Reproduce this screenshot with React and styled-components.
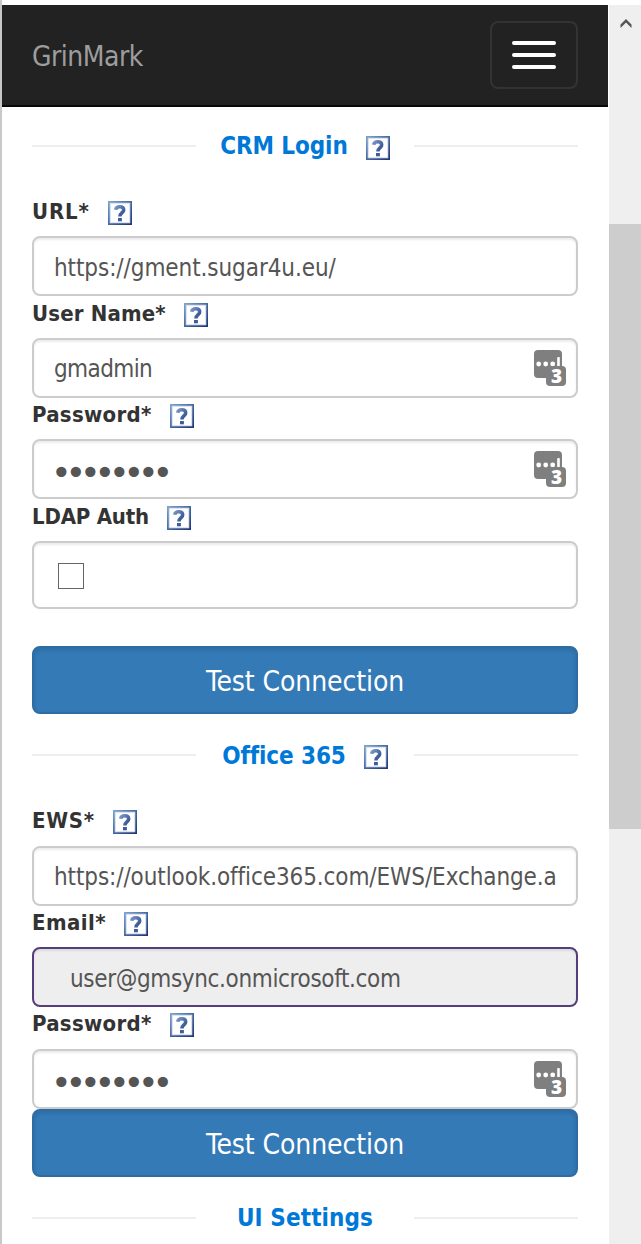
/* eslint-disable react/prop-types */
import styled, { createGlobalStyle } from "styled-components";

const crmFields = [
    {
        label: "URL*",
        tracking: 0.9,
        value: "https://gment.sugar4u.eu/",
        spacing: -0.08,
        lead: 5,
        row: 40,
        drop: 4,
    },
    {
        label: "User Name*",
        tracking: 0.15,
        value: "gmadmin",
        lead: 7,
        row: 42,
        manager: true,
    },
    {
        label: "Password*",
        tracking: 0.3,
        value: "password",
        type: "password",
        lead: 6,
        row: 41,
        manager: true,
    },
];

const officeFields = [
    {
        label: "EWS*",
        tracking: 0.75,
        value: "https://outlook.office365.com/EWS/Exchange.a",
        spacing: -0.1,
        lead: 5,
        row: 41,
        drop: 2,
    },
    {
        label: "Email*",
        tracking: 0.45,
        value: "user@gmsync.onmicrosoft.com",
        spacing: -0.36,
        lead: 6,
        row: 41,
        drop: 4,
        locked: true,
    },
    {
        label: "Password*",
        tracking: 0.3,
        value: "password",
        type: "password",
        lead: 6,
        row: 42,
        manager: true,
    },
];

const Help = () => (
    <HelpIcon viewBox="0 0 24 24" aria-hidden="true">
        <defs>
            <linearGradient id="help" x1="0" y1="0" x2="1" y2="1">
                <stop offset="0" stopColor="#7fa6d0" />
                <stop offset="0.5" stopColor="#45689f" />
                <stop offset="1" stopColor="#1d3273" />
            </linearGradient>
            <linearGradient id="mark" x1="0" y1="0" x2="1" y2="1">
                <stop offset="0" stopColor="#7593c2" />
                <stop offset="1" stopColor="#2c4a8c" />
            </linearGradient>
        </defs>
        <rect width="24" height="24" fill="url(#help)" />
        <rect x="1.700" y="1.700" width="20.600" height="20.600" fill="#cfd9e8" />
        <rect x="2.700" y="2.700" width="18.600" height="18.600" fill="#fff" />
        <path
            d="M7.700 8.800C8 6.600 9.400 5.800 11.700 5.800c2.500 0 4 1.200 4 3.100 0 2.700-3.800 2.800-3.800 6.500"
            fill="none"
            stroke="url(#mark)"
            strokeWidth="3.500"
        />
        <rect x="10" y="17" width="3.900" height="3.300" fill="#3d5c9b" />
    </HelpIcon>
);

const Manager = () => (
    <ManagerIcon viewBox="0 0 32 36" aria-hidden="true">
        <rect width="28" height="28" rx="4" fill="#7f7f7f" />
        <circle cx="4.700" cy="14" r="2.400" fill="#fff" />
        <circle cx="11.700" cy="14" r="2.400" fill="#fff" />
        <circle cx="18.700" cy="14" r="2.400" fill="#fff" />
        <rect x="23.200" y="7" width="2.600" height="10" rx="1" fill="#fff" />
        <rect x="12" y="16" width="20" height="20" rx="4" fill="#7f7f7f" />
        <Count x="22.500" y="33.200" textAnchor="middle">
            3
        </Count>
    </ManagerIcon>
);

const Heading = ({ title, help, spacing, gap, drop }) => (
    <Legend $gap={gap}>
        <Title $spacing={spacing} $drop={drop}>
            <span>{title}</span>
            {help && <Help />}
        </Title>
    </Legend>
);

const Field = ({
    label,
    tracking,
    value,
    type,
    lead,
    row,
    drop,
    manager,
    locked,
    spacing,
}) => (
    <div>
        <Label $lead={lead} $row={row} $tracking={tracking}>
            <span>{label}</span>
            <Help />
        </Label>
        <InputBox $locked={locked}>
            {type === "password" ? (
                <PasswordInput type="password" defaultValue={value} />
            ) : (
                <Input
                    type="text"
                    defaultValue={value}
                    disabled={locked}
                    $spacing={spacing}
                    $drop={drop}
                />
            )}
            {manager && <Manager />}
        </InputBox>
    </div>
);

export default function App() {
    return (
        <>
            <GlobalStyle />
            <Window>
                <Page>
                    <Navbar>
                        <Brand>GrinMark</Brand>
                        <Toggle aria-label="menu">
                            <Bar />
                            <Bar />
                            <Bar />
                        </Toggle>
                    </Navbar>
                    <Form>
                        <Heading title="CRM Login" help spacing={-0.1} />
                        {crmFields.map((field) => (
                            <Field key={field.label} {...field} />
                        ))}
                        <Label $lead={7} $row={42} $tracking={-0.2}>
                            <span>LDAP Auth</span>
                            <Help />
                        </Label>
                        <CheckBoxRow>
                            <CheckBox type="checkbox" />
                        </CheckBoxRow>
                        <Button $gap={37}>Test Connection</Button>
                        <Heading
                            title="Office 365"
                            help
                            spacing={-0.1}
                            gap={2}
                            drop={1}
                        />
                        {officeFields.map((field) => (
                            <Field key={field.label} {...field} />
                        ))}
                        <Button>Test Connection</Button>
                        <Heading title="UI Settings" spacing={0.1} gap={2} />
                    </Form>
                </Page>
                <ScrollBar>
                    <Arrow viewBox="0 0 12 10">
                        <path
                            d="M6 0 11.500 5.500V9L6 3.500.500 9V5.500z"
                            fill="#555"
                        />
                    </Arrow>
                    <Thumb />
                </ScrollBar>
            </Window>
        </>
    );
}

const GlobalStyle = createGlobalStyle`
    * {
        box-sizing: border-box;
    }

    body {
        margin: 0;
        background: #fff;
        color: #333;
        font-family: "DejaVu Sans Condensed", "DejaVu Sans", sans-serif;
        font-stretch: condensed;
    }

    input,
    button {
        font-family: inherit;
        font-stretch: inherit;
    }
`;

const Window = styled.div`
    display: flex;
    width: 641px;
    height: 1244px;
    padding-top: 5px;
    border-left: 2px solid #c8c8c8;
    overflow: hidden;
`;

const Page = styled.div`
    width: 606px;
    margin-right: 1px;
    flex-shrink: 0;
`;

const Navbar = styled.nav`
    height: 102px;
    padding: 0 30px;
    display: flex;
    align-items: center;
    justify-content: space-between;
    background: #222;
    border-bottom: 2px solid #080808;
`;

const Brand = styled.span`
    padding-top: 3px;
    color: #9d9d9d;
    font-size: 28px;
    letter-spacing: -0.5px;
`;

const Toggle = styled.button`
    width: 88px;
    height: 68px;
    padding: 0;
    display: flex;
    flex-direction: column;
    align-items: center;
    justify-content: center;
    gap: 8px;
    background: transparent;
    border: 2px solid #333;
    border-radius: 8px;
`;

const Bar = styled.span`
    width: 44px;
    height: 4px;
    border-radius: 2px;
    background: #fff;
`;

const Form = styled.main`
    padding: 0 30px;
`;

const Legend = styled.div`
    height: 89px;
    margin-top: ${(props) => props.$gap || 0}px;
    padding-top: 24px;
    display: grid;
    grid-template-columns: 164px 1fr 164px;
    align-items: start;

    &::before,
    &::after {
        content: "";
        height: 2px;
        margin-top: 14px;
        background: #eee;
    }
`;

const Title = styled.h2`
    margin: 1px 0 0;
    height: 29px;
    display: flex;
    justify-content: center;
    color: #0078d7;
    font-size: 24px;
    line-height: 29px;
    letter-spacing: ${(props) => props.$spacing}px;

    span {
        padding-top: ${(props) => props.$drop || 0}px;
    }

    svg {
        margin: 4px 0 0 18px;
    }
`;

const HelpIcon = styled.svg`
    width: 24px;
    height: 24px;
    flex-shrink: 0;
`;

const Label = styled.label`
    height: ${(props) => props.$row}px;
    padding-top: ${(props) => props.$lead}px;
    display: flex;
    font-size: 22px;
    font-weight: bold;
    line-height: 22px;
    letter-spacing: ${(props) => props.$tracking}px;

    svg {
        margin-left: 18px;
    }
`;

const InputBox = styled.div`
    height: 60px;
    padding: 0 ${(props) => (props.$locked ? "36px" : "20px")};
    display: flex;
    align-items: center;
    position: relative;
    background: ${(props) => (props.$locked ? "#eee" : "#fff")};
    border: 2px solid ${(props) => (props.$locked ? "#563d7c" : "#ccc")};
    border-radius: 8px;
    box-shadow: inset 0 2px 2px rgba(0, 0, 0, 0.075);
`;

const Input = styled.input`
    width: 100%;
    height: 56px;
    padding: ${(props) => props.$drop || 2}px 0 0;
    border: none;
    outline: none;
    background: transparent;
    color: #555;
    font-size: 24px;
    letter-spacing: ${(props) => props.$spacing ?? -0.6}px;
`;

const PasswordInput = styled(Input)`
    width: 300px;
    margin-left: -3px;
    padding-top: 7px;
    font-family: "DejaVu Sans", sans-serif;
    font-stretch: normal;
    font-size: 35px;
    letter-spacing: -6.150px;
`;

const ManagerIcon = styled.svg`
    width: 32px;
    height: 36px;
    position: absolute;
    top: 10px;
    right: 10px;
    overflow: visible;
`;

const Count = styled.text`
    fill: #fff;
    font-family: "Open Sans", sans-serif;
    font-size: 19px;
    font-stretch: normal;
    font-weight: 800;
`;

const CheckBoxRow = styled.div`
    height: 68px;
    padding: 2px 0 0 24px;
    display: flex;
    align-items: center;
    border: 2px solid #ccc;
    border-radius: 8px;
    box-shadow: inset 0 2px 2px rgba(0, 0, 0, 0.075);
`;

const CheckBox = styled.input`
    width: 26px;
    height: 26px;
    margin: 0;
    appearance: none;
    background: #fff;
    border: 1px solid #666;
`;

const Button = styled.button`
    width: 100%;
    height: 68px;
    margin-top: ${(props) => props.$gap || 0}px;
    padding: 3px 0 0;
    display: block;
    background: #337ab7;
    border: 2px solid #2e6da4;
    border-radius: 8px;
    box-shadow: inset 0 2px 4px rgba(0, 0, 0, 0.125);
    color: #fff;
    font-size: 28px;
    letter-spacing: -0.1px;
`;

const ScrollBar = styled.aside`
    width: 32px;
    flex-shrink: 0;
    background: #efefef;
`;

const Arrow = styled.svg`
    display: block;
    width: 12px;
    height: 10px;
    margin: 14px 0 0 11px;
`;

const Thumb = styled.div`
    height: 605px;
    margin-top: 195px;
    background: #cdcdcd;
`;
